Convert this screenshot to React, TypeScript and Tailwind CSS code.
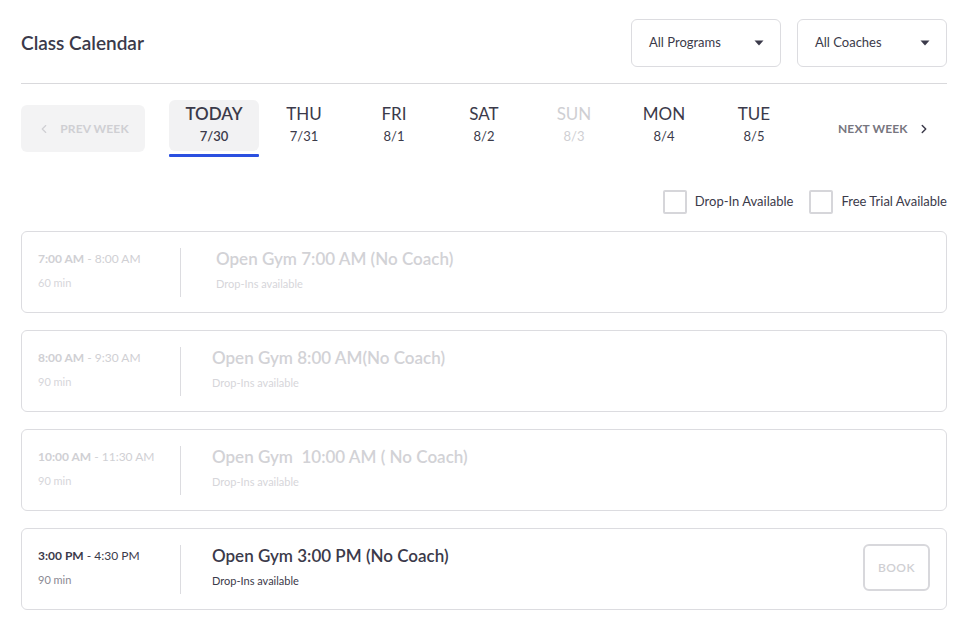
import React from 'react';
import { ChevronLeft, ChevronRight } from 'lucide-react';

const days = [
  { name: 'TODAY', date: '7/30', today: true },
  { name: 'THU', date: '7/31' },
  { name: 'FRI', date: '8/1' },
  { name: 'SAT', date: '8/2' },
  { name: 'SUN', date: '8/3', off: true },
  { name: 'MON', date: '8/4' },
  { name: 'TUE', date: '8/5' },
];

const classes = [
  { start: '7:00 AM', end: '8:00 AM', len: '60 min', title: 'Open Gym 7:00 AM (No Coach)', past: true, indent: true },
  { start: '8:00 AM', end: '9:30 AM', len: '90 min', title: 'Open Gym 8:00 AM(No Coach)', past: true },
  { start: '10:00 AM', end: '11:30 AM', len: '90 min', title: 'Open Gym  10:00 AM ( No Coach)', past: true },
  { start: '3:00 PM', end: '4:30 PM', len: '90 min', title: 'Open Gym 3:00 PM (No Coach)', past: false },
];

function Caret() {
  return (
    <svg width="10" height="6" viewBox="0 0 10 6" className="shrink-0">
      <path d="M0.5 0.5 H9.5 L5 5.5 Z" fill="#3b3a4a" />
    </svg>
  );
}

function Select({ label }: { label: string }) {
  return (
    <div className="w-[150px] h-[48px] flex items-center justify-between pl-[17px] pr-[16px] border border-[#dcdce0] rounded-[6px] bg-white">
      <span className="text-[13px] text-[#3b3a4a]">{label}</span>
      <Caret />
    </div>
  );
}

function Checkbox({ label }: { label: string }) {
  return (
    <label className="flex items-center gap-[8px]">
      <span className="w-[24px] h-[24px] border-2 border-[#d6d6da] rounded-[2px] bg-white" />
      <span className="text-[13px] text-[#3b3a4a]">{label}</span>
    </label>
  );
}

export default function App() {
  return (
    <div
      className="w-[969px] min-h-[617px] bg-white pl-[21px] pr-[22px] pt-[19px] pb-[8px]"
      style={{ fontFamily: "'Source Sans Pro', Lato, 'Noto Sans', sans-serif" }}
    >
      {/* Header */}
      <div className="flex items-center justify-between pb-[16px] border-b border-[#d9d9dc]">
        <h1 className="text-[19px] font-semibold text-[#3b3a4a]">Class Calendar</h1>
        <div className="flex gap-[16px]">
          <Select label="All Programs" />
          <Select label="All Coaches" />
        </div>
      </div>

      {/* Week nav */}
      <div className="flex items-start mt-[16px]">
        <button className="mt-[5px] w-[124px] h-[47px] rounded-[6px] bg-[#f3f3f4] flex items-center justify-center gap-[9px] text-[#cfcfd3]">
          <ChevronLeft className="w-[14px] h-[14px]" strokeWidth={2} />
          <span className="text-[12px] font-bold tracking-[0.01em]">PREV WEEK</span>
        </button>
        <div className="flex ml-[24px]">
          {days.map((d) => (
            <div key={d.name} className="w-[90px] flex flex-col items-center">
              <div
                className={`w-[90px] h-[51px] rounded-[6px] flex flex-col items-center pt-[3px] ${
                  d.today ? 'bg-[#f2f2f3]' : ''
                }`}
              >
                <span
                  className={`text-[17px] leading-[22px] ${
                    d.today ? 'font-semibold text-[#3b3a4a]' : d.off ? 'text-[#cfcfd3]' : 'text-[#3b3a4a]'
                  }`}
                >
                  {d.name}
                </span>
                <span
                  className={`text-[13px] leading-[20px] mt-[1px] ${
                    d.today ? 'font-semibold text-[#3b3a4a]' : d.off ? 'text-[#cfcfd3]' : 'text-[#3b3a4a]'
                  }`}
                >
                  {d.date}
                </span>
              </div>
              {d.today && <div className="mt-[3px] w-[90px] h-[3px] rounded-[1px] bg-[#2b50e0]" />}
            </div>
          ))}
        </div>
        <button className="ml-[39px] mt-[5px] h-[47px] flex items-center gap-[9px] text-[#77767f]">
          <span className="text-[12px] font-bold tracking-[0.01em]">NEXT WEEK</span>
          <ChevronRight className="w-[14px] h-[14px] text-[#3b3a4a]" strokeWidth={2.5} />
        </button>
      </div>

      {/* Filters */}
      <div className="flex justify-end gap-[16px] mt-[33px]">
        <Checkbox label="Drop-In Available" />
        <Checkbox label="Free Trial Available" />
      </div>

      {/* Class list */}
      <div className="flex flex-col gap-[17px] mt-[17px]">
        {classes.map((c) => (
          <div key={c.title} className="h-[82px] border border-[#dcdce0] rounded-[6px] flex items-center pl-[16px] pr-[16px]">
            <div className="w-[143px] h-[49px] border-r border-[#dcdce0] flex flex-col pt-[2px]">
              <span className={`text-[12px] leading-[18px] ${c.past ? 'text-[#d0d0d4]' : 'text-[#3b3a4a]'}`}>
                <span className="font-bold">{c.start}</span> - {c.end}
              </span>
              <span className={`text-[11px] leading-[16px] mt-[7px] ${c.past ? 'text-[#d6d6da]' : 'text-[#8a8993]'}`}>{c.len}</span>
            </div>
            <div className={`flex-1 h-[49px] flex flex-col ${c.indent ? 'pl-[35px]' : 'pl-[31px]'}`}>
              <span className={`text-[17px] leading-[22px] font-semibold whitespace-pre ${c.past ? 'text-[#d2d2d6]' : 'text-[#3b3a4a]'}`}>
                {c.title}
              </span>
              <span className={`text-[11px] leading-[16px] mt-[6px] ${c.past ? 'text-[#d6d6da]' : 'text-[#3b3a4a]'}`}>Drop-Ins available</span>
            </div>
            {!c.past && (
              <button className="-mt-[3px] w-[67px] h-[47px] border-2 border-[#d8d8dc] rounded-[6px] text-[12px] font-semibold text-[#cfcfd3] tracking-[0.04em]">
                BOOK
              </button>
            )}
          </div>
        ))}
      </div>
    </div>
  );
}
